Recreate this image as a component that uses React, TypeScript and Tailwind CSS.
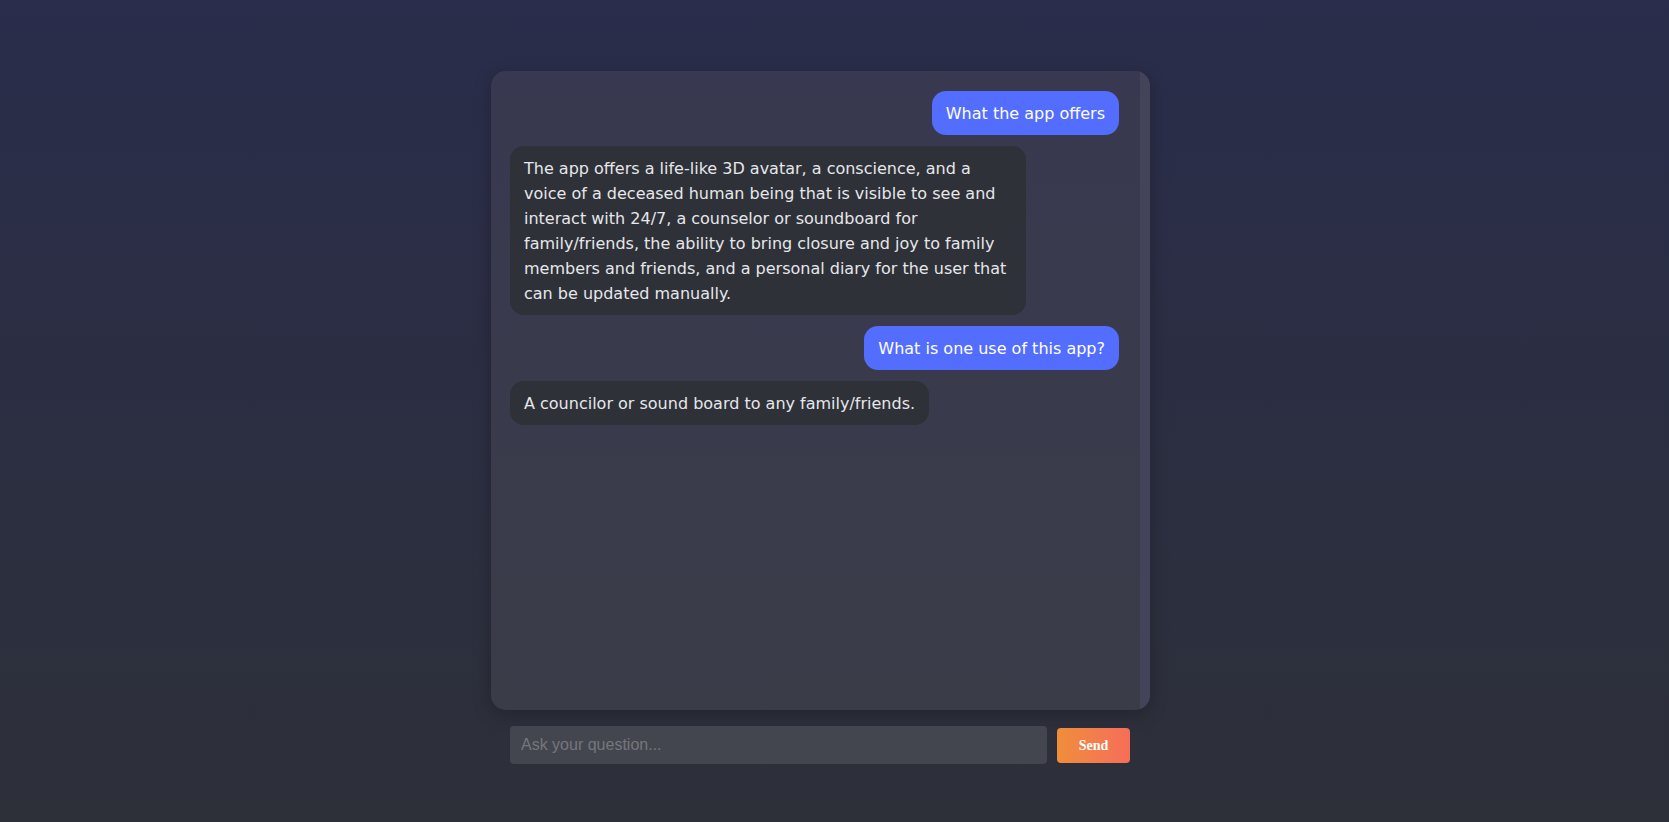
const messages = [
  { from: "user", text: "What the app offers" },
  {
    from: "bot",
    text: "The app offers a life-like 3D avatar, a conscience, and a voice of a deceased human being that is visible to see and interact with 24/7, a counselor or soundboard for family/friends, the ability to bring closure and joy to family members and friends, and a personal diary for the user that can be updated manually.",
  },
  { from: "user", text: "What is one use of this app?" },
  { from: "bot", text: "A councilor or sound board to any family/friends." },
];

export default function App() {
  return (
    <div className="min-h-[822px] w-full bg-gradient-to-b from-[#2a2d4b] to-[#2d3039] pt-[71px] pr-[28px] flex justify-center font-['DejaVu_Sans',sans-serif]">
      <div className="w-[659px] flex flex-col">
        {/* chat box */}
        <div className="h-[639px] flex rounded-[15px] overflow-hidden bg-gradient-to-b from-[#383950] to-[#3a3c48] shadow-[0_4px_18px_rgba(0,0,0,0.25)]">
          <div className="flex-1 flex flex-col gap-[11px] pt-[20px] pl-[19px] pr-[21px]">
            {messages.map((m, i) =>
              m.from === "user" ? (
                <div key={i} className="flex justify-end">
                  <div className="bg-[#536dfe] text-white text-[16px] leading-[25px] px-[14px] py-[9.5px] rounded-[14px]">
                    {m.text}
                  </div>
                </div>
              ) : (
                <div key={i} className="flex justify-start">
                  <div className="bg-[#2e3138] text-[#e6e7ea] text-[16px] leading-[25px] px-[14px] py-[9.5px] rounded-[14px] max-w-[516px]">
                    {m.text}
                  </div>
                </div>
              )
            )}
          </div>
          <div className="w-[10px] bg-[#43445a]" />
        </div>

        {/* input row */}
        <div className="flex items-center gap-[10px] px-[19px] pr-[20px] mt-[16px]">
          <input
            className="flex-1 h-[38px] rounded-[4px] bg-[#44464f] px-[11px] text-[16px] text-white outline-none placeholder:text-[#75767c] font-['Liberation_Sans',sans-serif]"
            placeholder="Ask your question..."
          />
          <button className="w-[73px] h-[35px] rounded-[4px] bg-gradient-to-r from-[#f08d3a] to-[#f66d58] text-white text-[14px] font-bold font-['Liberation_Serif',serif]">
            Send
          </button>
        </div>
      </div>
    </div>
  );
}
